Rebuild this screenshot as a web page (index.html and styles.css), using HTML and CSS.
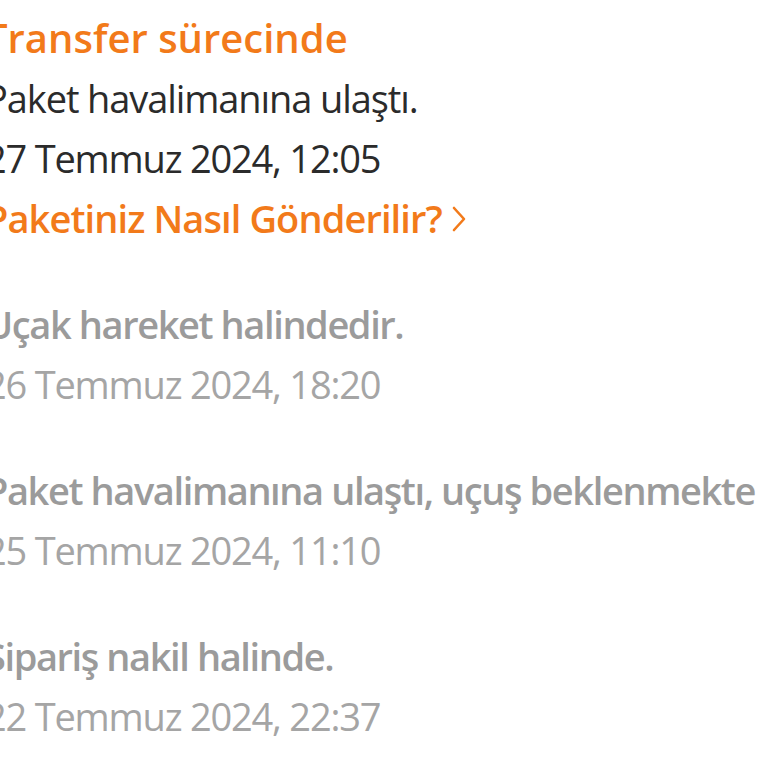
FILE: index.html
```html
<!DOCTYPE html>
<html lang="tr">
<head>
<meta charset="utf-8">
<link rel="stylesheet" href="styles.css">
</head>
<body>
<div class="timeline">
  <div class="entry current">
    <div class="status">Transfer sürecinde</div>
    <div class="desc">Paket havalimanına ulaştı.</div>
    <div class="date">27 Temmuz 2024, 12:05</div>
    <a class="link" href="#">Paketiniz Nasıl Gönderilir?<svg class="chev" viewBox="0 0 14 26" width="14" height="26"><path d="M2 2 L12 13 L2 24" fill="none" stroke="currentColor" stroke-width="2.6" stroke-linecap="round" stroke-linejoin="round"/></svg></a>
  </div>
  <div class="entry past">
    <div class="desc">Uçak hareket halindedir.</div>
    <div class="date">26 Temmuz 2024, 18:20</div>
  </div>
  <div class="entry past">
    <div class="desc">Paket havalimanına ulaştı, uçuş beklenmekte</div>
    <div class="date">25 Temmuz 2024, 11:10</div>
  </div>
  <div class="entry past">
    <div class="desc">Sipariş nakil halinde.</div>
    <div class="date">22 Temmuz 2024, 22:37</div>
  </div>
</div>
</body>
</html>
```
FILE: styles.css
```css
html, body {
  margin: 0;
  padding: 0;
  background: #ffffff;
  overflow: hidden;
}
body {
  font-family: "Open Sans", "Noto Sans", "DejaVu Sans", sans-serif;
  font-size: 38px;
  line-height: 60px;
}
.timeline {
  display: flex;
  flex-direction: column;
  gap: 46px;
  margin-left: -15px;
  padding-top: 8px;
  white-space: nowrap;
}
.entry {
  display: flex;
  flex-direction: column;
}
.status {
  color: #f27a1a;
  font-weight: 600;
  font-size: 40px;
}
.desc {
  letter-spacing: -1.1px;
}
.date {
  letter-spacing: -1.2px;
}
.current .desc,
.current .date {
  color: #2b2b2b;
}
.link {
  color: #f27a1a;
  font-weight: 600;
  letter-spacing: -0.9px;
  text-decoration: none;
  display: flex;
  align-items: center;
  gap: 10px;
}
.chev {
  color: #f27a1a;
  margin-top: 2px;
}
.past .desc {
  color: #9b9b9b;
  font-weight: 600;
  letter-spacing: -1.4px;
}
.past .date {
  color: #a5a5a5;
}
```
